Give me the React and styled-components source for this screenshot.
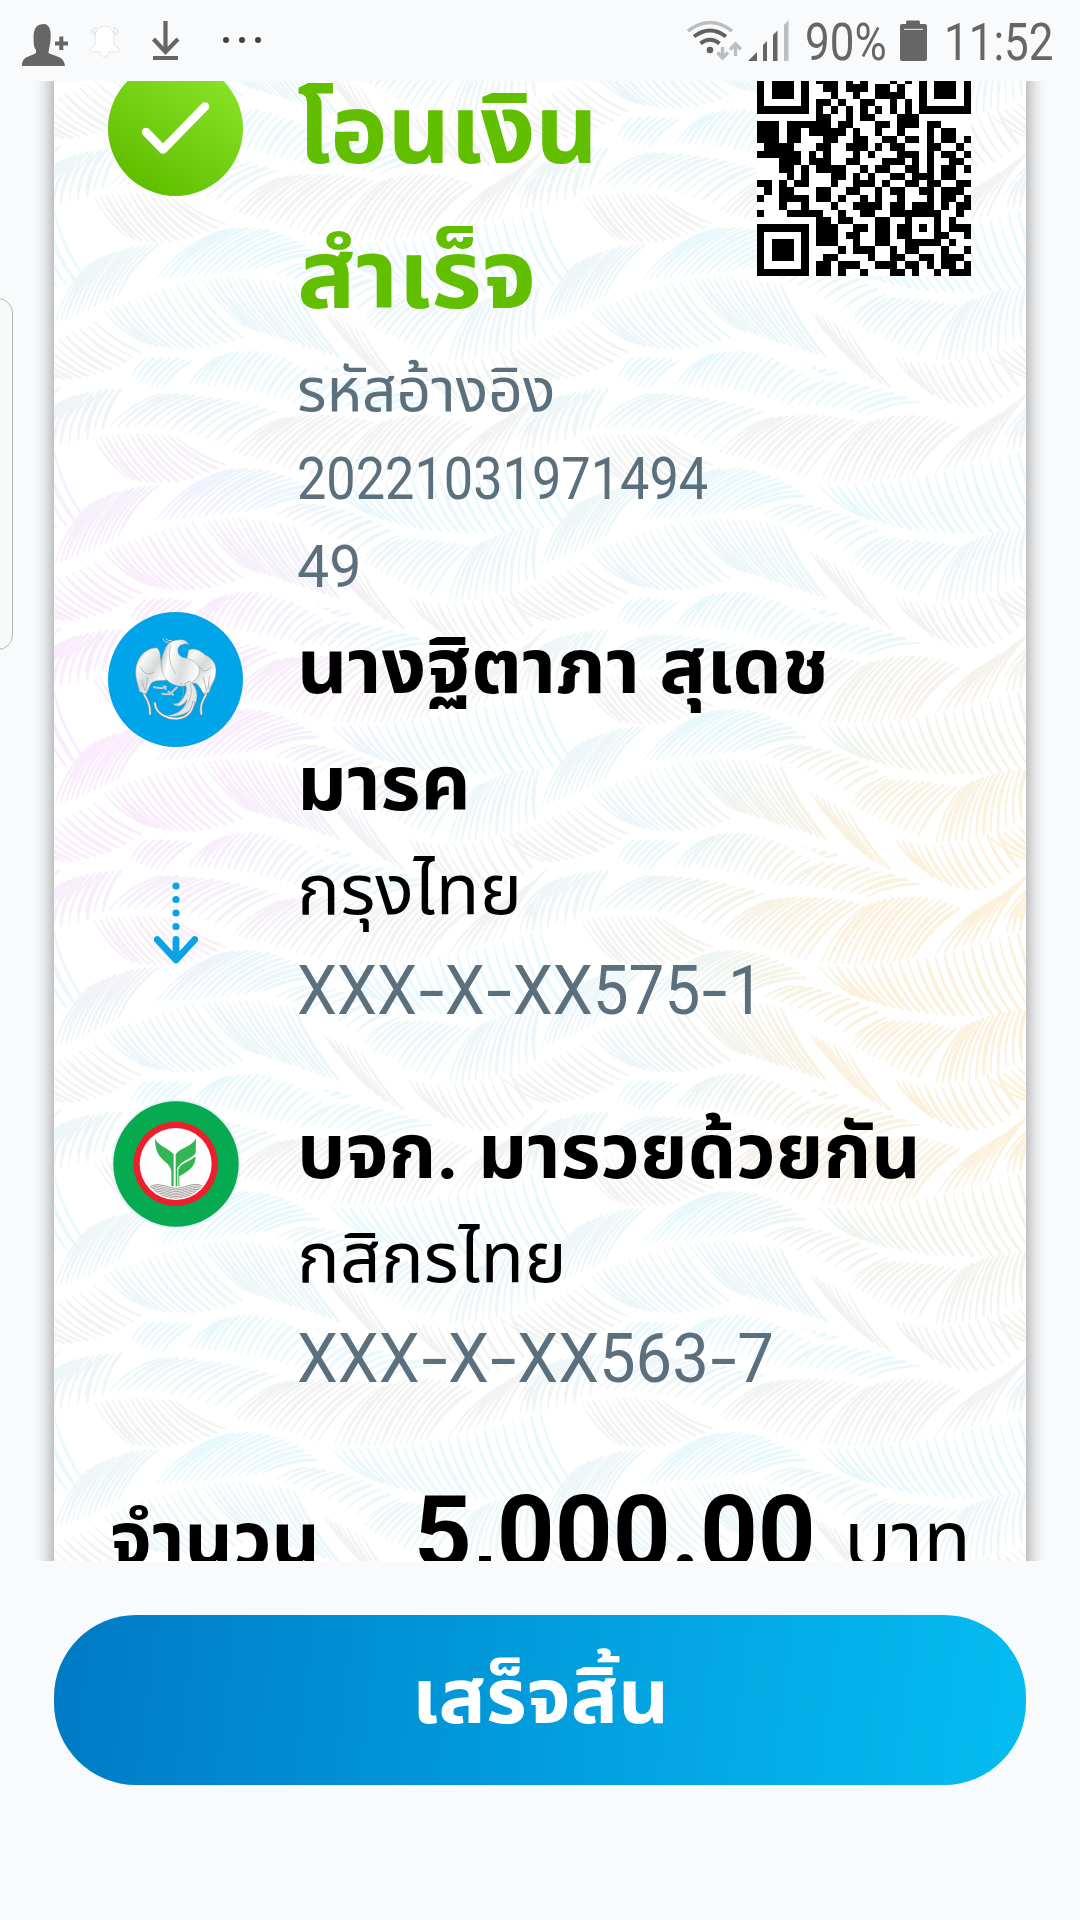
import React, { useLayoutEffect, useRef, useState } from "react";
import styled, { createGlobalStyle } from "styled-components";

const GlobalStyle = createGlobalStyle`
  * { box-sizing: border-box; }
  html, body { margin: 0; padding: 0; }
  body {
    background: #f9fafc;
    font-family: Roboto, "Noto Sans Thai", "Noto Sans", "Liberation Sans", sans-serif;
  }
`;

const Screen = styled.div`
  position: relative;
  display: flex;
  flex-direction: column;
  width: 1080px;
  height: 1920px;
  overflow: hidden;
  background: #f9fafc;
`;

const StatusBar = styled.header`
  display: flex;
  justify-content: space-between;
  height: 81px;
  flex: none;
`;

const StatusGroup = styled.div`
  display: flex;
  align-items: flex-start;
`;

const Viewport = styled.main`
  flex: none;
  height: 1480px;
  padding: 0 54px;
  overflow: hidden;
`;

const Card = styled.section`
  position: relative;
  width: 972px;
  height: 1600px;
  padding: 0 54px;
  background: #fff;
  box-shadow: 0 0 19px rgba(0, 0, 0, 0.46);
`;

const Backdrop = styled.svg`
  position: absolute;
  inset: 0;
  width: 972px;
  height: 1600px;
`;

const CardBody = styled.div`
  position: relative;
  display: flex;
  flex-direction: column;
  margin-top: -18px;
`;

const Row = styled.div`
  display: grid;
  grid-template-columns: 135px 1fr;
  column-gap: 54px;
  height: ${(p) => p.$height}px;
`;

const IconColumn = styled.div`
  display: flex;
  flex-direction: column;
  align-items: center;
  margin-top: ${(p) => -(p.$lift || 0)}px;
  gap: ${(p) => p.$gap || 0}px;

  svg { flex: none; display: block; }
`;

const HeadContent = styled.div`
  display: flex;
  justify-content: space-between;
  padding-right: 1px;
`;

const TextColumn = styled.div`
  display: flex;
  flex-direction: column;
`;

const Line = styled.div`
  display: flex;
  align-items: baseline;
  height: ${(p) => p.$height}px;
  padding-left: ${(p) => p.$indent || 0}px;

  &::before {
    content: "";
    width: 0;
    height: ${(p) => p.$baseline}px;
  }
`;

const TextRun = styled.span`
  display: inline-block;
  flex: none;
  transform-origin: 0 50%;
  white-space: nowrap;
  line-height: 1;
  font-size: ${(p) => p.$size}px;
  font-weight: ${(p) => p.$weight || 400};
  color: ${(p) => p.$color || "#000"};
`;

const FitBox = styled.span`
  display: inline-flex;
  align-items: baseline;
  flex: none;
  width: ${(p) => p.$width}px;
`;

const Dash = styled.span`
  display: inline-block;
  margin: 0 5px 0 6px;
  transform: scaleX(1.45);
`;

function FitText({ width, children, ...rest }) {
  const ref = useRef(null);
  const [scale, setScale] = useState(1);
  useLayoutEffect(() => {
    if (ref.current) setScale(width / ref.current.offsetWidth);
  }, [width]);
  return (
    <FitBox $width={width}>
      <TextRun ref={ref} style={{ transform: `scaleX(${scale})` }} {...rest}>
        {children}
      </TextRun>
    </FitBox>
  );
}

function AccountNumber({ value, width }) {
  return (
    <Line $height={98} $baseline={65}>
      <FitText width={width} $size={69} $color={SLATE}>
        {value.split("-").map((part, i) => (
          <React.Fragment key={i}>
            {i > 0 && <Dash>-</Dash>}
            {part}
          </React.Fragment>
        ))}
      </FitText>
    </Line>
  );
}

const AmountRow = styled.div`
  display: flex;
  height: 120px;
`;

const Footer = styled.footer`
  flex: none;
  padding: 54px 54px 0;
`;

const DoneButton = styled.button`
  display: flex;
  justify-content: center;
  width: 972px;
  height: 170px;
  padding: 0;
  border: 0;
  border-radius: 82px;
  font-family: inherit;
  background: linear-gradient(97deg, #007ac5 0%, #0197d9 42%, #03a9e4 68%, #05bcf1 100%);
`;

const EdgeHandle = styled.div`
  position: absolute;
  left: -20px;
  top: 298px;
  width: 33px;
  height: 352px;
  border: 1.5px solid #b5b8b8;
  border-radius: 15px;
  background: #f8faf9;
`;

/* ---------- feather background ---------- */

const TILE_W = 487;
const TILE_H = 241;
const CYAN = "#e8f8fd";
const TEAL = "#edf6f8";
const GREY = "#f2f4f4";

/* base curve, tip curve, stroke count, bend, colour */
const LEAVES = [
  [[350, 165, 390, 190, 440, 200], [395, 108, 470, 105, 530, 115], 7, -0.12, CYAN],
  [[520, 188, 680, 190, 850, 247], [600, 108, 740, 40, 940, 185], 18, -0.12, CYAN],
  [[885, 245, 980, 250, 1085, 278], [960, 175, 1090, 180, 1240, 240], 9, -0.14, CYAN],
  [[900, 130, 930, 145, 960, 160], [905, 128, 950, 140, 1000, 150], 4, 0.05, CYAN],
  [[285, 315, 450, 300, 625, 368], [440, 215, 600, 215, 780, 268], 14, -0.14, TEAL],
  [[650, 392, 760, 420, 900, 467], [790, 290, 930, 265, 1065, 298], 14, -0.12, GREY],
  [[950, 476, 1090, 490, 1220, 462], [1080, 305, 1230, 250, 1360, 312], 15, -0.14, GREY],
  [[1290, 450, 1370, 430, 1440, 408], [1440, 300, 1500, 270, 1580, 195], 7, -0.12, GREY],
  [[1500, 385, 1560, 378, 1660, 350], [1530, 300, 1610, 220, 1700, 215], 8, -0.12, GREY],
  [[945, 488, 1240, 490, 1560, 378], [1050, 575, 1310, 680, 1660, 600], 24, 0.12, CYAN],
  [[425, 592, 550, 590, 740, 560], [610, 450, 760, 410, 905, 522], 15, -0.14, CYAN],
  [[780, 580, 900, 610, 1045, 700], [870, 545, 1010, 555, 1145, 640], 11, -0.12, TEAL],
  [[1040, 722, 1120, 770, 1235, 822], [1125, 650, 1250, 650, 1350, 672], 12, -0.12, TEAL],
  [[1290, 838, 1400, 840, 1545, 770], [1370, 670, 1460, 620, 1555, 620], 13, -0.14, TEAL],
  [[125, 725, 210, 700, 310, 645], [230, 545, 330, 490, 430, 490], 12, -0.14, TEAL],
  [[270, 690, 380, 640, 530, 600], [390, 785, 520, 830, 680, 770], 14, 0.12, TEAL],
  [[10, 825, 120, 780, 240, 722], [130, 895, 260, 900, 380, 815], 12, 0.1, GREY],
  [[560, 598, 680, 575, 830, 612], [690, 740, 820, 780, 965, 830], 15, 0.08, TEAL],
  [[920, 690, 960, 710, 1030, 745], [1010, 800, 1080, 890, 1155, 920], 7, 0.08, GREY],
  [[1170, 825, 1290, 875, 1470, 800], [1230, 900, 1390, 1050, 1535, 915], 13, 0.1, GREY],
  [[240, 348, 350, 325, 480, 345], [340, 470, 470, 510, 630, 430], 14, 0.1, GREY],
  [[50, 345, 150, 330, 265, 325], [150, 235, 230, 200, 320, 200], 10, -0.14, TEAL],
];

const quad = (c, t) => {
  const u = 1 - t;
  return [
    (u * u * c[0] + 2 * u * t * c[2] + t * t * c[4]) / 2.958,
    (u * u * c[1] + 2 * u * t * c[3] + t * t * c[5]) / 3,
  ];
};

const r1 = (n) => Math.round(n * 10) / 10;

function leafPath([base, tip, count, bend]) {
  let d = "";
  for (let i = 0; i < count; i += 1) {
    const t = i / (count - 1);
    const [ax, ay] = quad(base, t);
    const [bx, by] = quad(tip, t);
    const dx = bx - ax;
    const dy = by - ay;
    const len = Math.hypot(dx, dy) || 1;
    const w = 1.5 + ((i * 7) % 5) * 0.35;
    const ox = (-dy / len) * w;
    const oy = (dx / len) * w;
    const cx = (ax + bx) / 2 - dy * bend;
    const cy = (ay + by) / 2 + dx * bend;
    d += `M${r1(ax + ox * 0.3)} ${r1(ay + oy * 0.3)}Q${r1(cx + ox)} ${r1(cy + oy)} ${r1(bx + ox * 0.5)} ${r1(by + oy * 0.5)}L${r1(bx - ox * 0.5)} ${r1(by - oy * 0.5)}Q${r1(cx - ox)} ${r1(cy - oy)} ${r1(ax - ox * 0.3)} ${r1(ay - oy * 0.3)}Z`;
  }
  return d;
}

const LEAF_PATHS = LEAVES.map((l) => ({ d: leafPath(l), color: l[4] }));

function Feathers() {
  const offsets = [];
  [-2, -1, 0, 1].forEach((x) => [-2, -1, 0, 1].forEach((y) => offsets.push([x, y])));
  return (
    <Backdrop viewBox="0 0 972 1600" aria-hidden="true">
      <defs>
        <g id="leaves">
          {LEAF_PATHS.map((l, i) => (
            <path key={i} d={l.d} fill={l.color} />
          ))}
        </g>
        <g id="leafShapes" fill="#fff">
          {LEAF_PATHS.map((l, i) => (
            <path key={i} d={l.d} />
          ))}
        </g>
        <pattern id="feather" width={TILE_W} height={TILE_H} patternUnits="userSpaceOnUse" x="446" y="259">
          {offsets.map(([x, y]) => (
            <use key={`${x}${y}`} href="#leaves" x={x * TILE_W} y={y * TILE_H} />
          ))}
        </pattern>
        <pattern id="featherMask" width={TILE_W} height={TILE_H} patternUnits="userSpaceOnUse" x="446" y="259">
          {offsets.map(([x, y]) => (
            <use key={`${x}${y}`} href="#leafShapes" x={x * TILE_W} y={y * TILE_H} />
          ))}
        </pattern>
        <mask id="featherCut" maskUnits="userSpaceOnUse" x="0" y="0" width="972" height="1600">
          <rect width="972" height="1600" fill="url(#featherMask)" />
        </mask>
        <radialGradient id="pink" gradientUnits="userSpaceOnUse" cx="40" cy="650" r="340">
          <stop offset="0.4" stopColor="#fcebfd" />
          <stop offset="1" stopColor="#fcebfd" stopOpacity="0" />
        </radialGradient>
        <radialGradient id="gold" gradientUnits="userSpaceOnUse" cx="960" cy="920" r="390">
          <stop offset="0.4" stopColor="#fdf1dc" />
          <stop offset="1" stopColor="#fdf1dc" stopOpacity="0" />
        </radialGradient>
      </defs>
      <rect width="972" height="1600" fill="url(#feather)" />
      <g mask="url(#featherCut)">
        <rect width="972" height="1600" fill="url(#pink)" />
        <rect width="972" height="1600" fill="url(#gold)" />
      </g>
    </Backdrop>
  );
}

/* ---------- QR code ---------- */

const QR_ROWS = [
  "11111110110010110010101111111",
  "10000010101101001101001000001",
  "10111010111010100010101011101",
  "10111010011011101101001011101",
  "10111010001001001111001011101",
  "10000010110100110010101000001",
  "11111110101010101010101111111",
  "00000000110010110001110000000",
  "11101111110110001101110110000",
  "11101101111101001001000101100",
  "11101100011001100110110101101",
  "01111000110011101011000110010",
  "11111101010001010001110101101",
  "00011101110011000111010100110",
  "00011010111100101100110101101",
  "00001010001101010011011101100",
  "11010110001001110100110110011",
  "01011000110011001011001101110",
  "10011110110100101001000101101",
  "00010010001001111011011101011",
  "10001111100100110011111110010",
  "00000000110110001100100010100",
  "11111110111001101101101010111",
  "10000010111011001101100011001",
  "10111010111001001100111110100",
  "10111010000101110010110001001",
  "10111010011000010011001101110",
  "10000010110111001110110101101",
  "11111110110100100011010010111",
];

function QrCode() {
  let d = "";
  QR_ROWS.forEach((row, y) => {
    for (let x = 0; x < row.length; x += 1) {
      if (row[x] === "1") d += `M${x} ${y}h1v1h-1z`;
    }
  });
  return (
    <svg width="214" height="214" viewBox="0 0 29 29" shapeRendering="crispEdges">
      <rect width="29" height="29" fill="#fff" />
      <path d={d} fill="#000" />
    </svg>
  );
}

/* ---------- icons ---------- */

function SuccessIcon() {
  return (
    <svg width="135" height="135" viewBox="0 0 135 135">
      <defs>
        <linearGradient id="ok" x1="0.25" y1="0.9" x2="0.8" y2="0.1">
          <stop offset="0" stopColor="#62bf00" />
          <stop offset="1" stopColor="#87e226" />
        </linearGradient>
      </defs>
      <circle cx="67.5" cy="67.5" r="67.5" fill="url(#ok)" />
      <path d="M38 71 L55 88.500 L97 45.500" fill="none" stroke="#fff" strokeWidth="8.600" strokeLinecap="round" strokeLinejoin="round" />
    </svg>
  );
}

function GarudaLogo() {
  return (
    <svg width="135" height="135" viewBox="0 0 405 405">
      <defs>
        <linearGradient id="silver" x1="0" y1="0" x2="1" y2="1">
          <stop offset="0" stopColor="#c0c3c3" />
          <stop offset="0.25" stopColor="#f8f8f8" />
          <stop offset="0.5" stopColor="#d6d9d9" />
          <stop offset="0.75" stopColor="#ffffff" />
          <stop offset="1" stopColor="#a3a8a9" />
        </linearGradient>
        <linearGradient id="silverBody" x1="0" y1="0" x2="1" y2="0.3">
          <stop offset="0" stopColor="#9fa4a5" />
          <stop offset="0.3" stopColor="#ffffff" />
          <stop offset="0.65" stopColor="#dadddd" />
          <stop offset="1" stopColor="#f9f9f9" />
        </linearGradient>
      </defs>
      <circle cx="202.5" cy="202.5" r="202.5" fill="#00a5e9" />
      <g stroke="#8b9192" strokeWidth="1.500">
        <path d="M147 107C110 107 84 140 83 178C82 202 90 215 94 238L112 247C121 237 122 225 130 214C142 202 160 208 180 204C166 176 160 155 158 141C157 128 157 116 147 107Z" fill="url(#silver)" />
        <path d="M239 129L241 114C254 106 276 113 292 129C317 140 328 162 323 188C320 211 306 222 305 239L291 249C281 240 278 227 270 219C256 206 240 224 214 211Z" fill="url(#silver)" />
        <path d="M242 98C239 88 227 81 211 84C190 84 176 96 169 116C158 139 156 164 166 187C177 216 212 230 240 219C262 208 280 188 274 168C266 150 248 140 229 137C206 134 204 106 219 99L233 95Z" fill="url(#silverBody)" />
        <path d="M229 215C243 230 230 252 221 264C210 277 196 279 190 270C204 291 226 282 237 263C230 295 200 311 168 311C205 320 254 304 264 270C273 245 262 219 245 208Z" fill="#e3e6e6" />
      </g>
      <g fill="none" strokeLinecap="round">
        <path d="M108 247C118 262 128 281 126 306M294 248C284 263 275 284 280 306" stroke="#909899" strokeWidth="8" />
        <path d="M108 247C118 262 128 281 126 306M294 248C284 263 275 284 280 306" stroke="#f3f4f4" strokeWidth="4" />
        <path d="M141 274C142 306 180 323 211 319C239 316 253 295 257 272" stroke="#838b8c" strokeWidth="8" />
        <path d="M141 274C142 306 180 323 211 319C239 316 253 295 257 272" stroke="#edeeee" strokeWidth="5" />
        <path d="M138 226L162 229L174 224M163 246L185 247L207 226M173 231L168 223M195 248L181 239" stroke="#c8cccc" strokeWidth="6" />
        <path d="M166 81Q168 92 181 91M174 81Q180 88 190 86" stroke="#d5d8d8" strokeWidth="3" />
        <path d="M189 100C178 132 186 160 202 184M219 212C235 241 223 270 203 280M247 216C258 251 239 285 207 304" stroke="#a8adad" strokeWidth="2" />
        <path d="M97 164Q111 198 139 180M275 165Q288 190 309 166M102 205L110 235M119 197L113 236M286 196L296 235M305 192L300 230" stroke="#a9aeae" strokeWidth="2.500" />
      </g>
    </svg>
  );
}

function TransferArrow() {
  return (
    <svg width="44" height="84" viewBox="0 0 44 84" fill="none">
      {[4, 17.5, 31, 44.5].map((y) => (
        <circle key={y} cx="22" cy={y} r="3.6" fill="#0aa3e4" />
      ))}
      <path d="M22 57.500V77M3.200 57.500L22 78L40.800 57.500" stroke="#0aa3e4" strokeWidth="6.800" strokeLinecap="round" strokeLinejoin="round" />
    </svg>
  );
}

function KBankLogo() {
  return (
    <svg width="130" height="130" viewBox="0 0 390 390">
      <defs>
        <clipPath id="kInner"><circle cx="195" cy="195" r="104" /></clipPath>
      </defs>
      <circle cx="195" cy="195" r="194" fill="#e7f1f6" />
      <circle cx="195" cy="195" r="188" fill="#06aa50" />
      <circle cx="194" cy="195" r="127" fill="#ec1f2d" />
      <circle cx="194" cy="195" r="108" fill="#fefefe" />
      <g fill="#33b554">
        <path d="M132 119C145 143 173 147 188 166L188 262H181V217C178 183 132 189 132 119Z" />
        <path d="M255 118C244 143 209 146 194 166V262H199V211C205 185 248 178 254 161Z" />
        <path d="M254 172C254 207 227 219 205 232V262H202V213C205 193 238 188 254 172Z" />
      </g>
      <g clipPath="url(#kInner)" fill="none" stroke="#8f8682" strokeWidth="2.400">
        {[0, 5, 10, 15, 20, 25, 30, 35, 40].map((y) => (
          <path key={y} d={`M75 ${263 + y}Q100 ${272 + y} 118 ${262 + y}T160 ${260 + y}T195 ${268 + y}T232 ${260 + y}T272 ${260 + y}T315 ${263 + y}`} />
        ))}
      </g>
    </svg>
  );
}

function NotificationIcons() {
  return (
    <svg width="280" height="81" viewBox="0 0 280 81" fill="#666">
      <path d="M22 66C22 56 30 57 36 53V50C33 46 34 42 33.500 37C34 28 36 24 45 24L47 25C51 28 51 34 50.500 40C50 45 49 48 48.500 53C56 57 64 56 65 66Z" />
      <path d="M59.300 36.500h4v5H68v4h-4.700v4.500h-4v-4.500H55v-4h4.300z" />
      <path d="M105 26C110 27 114 31 114 38V45C115 47 119 47 119 50C119 53 116 52 109 52C108 58 101 58 100 52C94 52 90 53 90 50C90 47 95 48 95 44V37C95 31 99 27 105 26Z" fill="#fff" stroke="#dfe0e0" strokeWidth="0.800" />
      <path d="M92 34Q91 28 97 28M94 36Q94 32 97 31M118 34Q119 28 113 28M116 36Q116 32 113 31" fill="none" stroke="#d4d6d6" strokeWidth="0.900" />
      <path d="M165.500 21V52M153.500 39L165.500 52L178 39" fill="none" stroke="#666" strokeWidth="4.200" />
      <rect x="153" y="56" width="25" height="4" />
      <g fill="#444">
        <circle cx="226" cy="40" r="3" />
        <circle cx="242" cy="40" r="3" />
        <circle cx="258" cy="40" r="3" />
      </g>
    </svg>
  );
}

function SignalIcons() {
  return (
    <svg width="120" height="81" viewBox="0 0 120 81" fill="none">
      <path d="M9 31Q31 14 53 31" stroke="#bcbdbe" strokeWidth="3.600" />
      <path d="M15 36.500Q31 24.500 47 36.500" stroke="#606060" strokeWidth="3.800" />
      <path d="M21.500 43.500Q31 36 40.500 43.500" stroke="#606060" strokeWidth="3.800" />
      <circle cx="31" cy="50" r="3.300" fill="#606060" />
      <path d="M43.500 47V57M38.500 52.500L43.500 58L49 52.500M56.500 56V45M51 49.500L56.500 44L62 49.500" stroke="#bcbdbe" strokeWidth="3.400" />
      <path d="M69 61L78 52V61ZM84 45L88 41V61H84ZM94 35L98.500 30.500V61H94Z" fill="#666" />
      <path d="M105 25L109.500 20V61H105Z" fill="#bcbdbe" />
    </svg>
  );
}

function BatteryIcon() {
  return (
    <svg width="57" height="81" viewBox="0 0 57 81">
      <path d="M20 20.500H32Q33 20.500 33 24H38Q40 24 40 26V59Q40 61 38 61H15Q13 61 13 59V26Q13 24 15 24H19Q19 20.500 20 20.500Z" fill="#666" />
      <rect x="17" y="28.800" width="19" height="1.200" fill="#ddd" />
    </svg>
  );
}

const Clock = styled(Line)`
  width: 136px;
`;

const GREEN = "#62bf00";
const SLATE = "#5c6f7c";

export default function App() {
  return (
    <Screen>
      <GlobalStyle />
      <StatusBar>
        <NotificationIcons />
        <StatusGroup>
          <SignalIcons />
          <Line $height={81} $baseline={60} $indent={6}>
            <FitText width={82} $size={52} $color="#666">90%</FitText>
          </Line>
          <BatteryIcon />
          <Clock $height={81} $baseline={60}>
            <FitText width={110} $size={52} $color="#666">11:52</FitText>
          </Clock>
        </StatusGroup>
      </StatusBar>

      <Viewport>
        <Card>
          <Feathers />
          <CardBody>
            <Row $height={554}>
              <IconColumn $lift={2}><SuccessIcon /></IconColumn>
              <HeadContent>
                <TextColumn>
                  <Line $height={145} $baseline={100}><FitText width={301} $size={96} $weight={700} $color={GREEN}>โอนเงิน</FitText></Line>
                  <Line $height={145} $baseline={100}><FitText width={239} $size={96} $weight={700} $color={GREEN}>สำเร็จ</FitText></Line>
                  <Line $height={88} $baseline={58}><FitText width={259} $size={60} $color={SLATE}>รหัสอ้างอิง</FitText></Line>
                  <Line $height={88} $baseline={58}><FitText width={411} $size={59} $color={SLATE}>20221031971494</FitText></Line>
                  <Line $height={88} $baseline={58}><FitText width={64} $size={59} $color={SLATE}>49</FitText></Line>
                </TextColumn>
                <IconColumn $lift={1}><QrCode /></IconColumn>
              </HeadContent>
            </Row>
            <Row $height={485}>
              <IconColumn $gap={135} $lift={5}>
                <GarudaLogo />
                <TransferArrow />
              </IconColumn>
              <TextColumn>
                <Line $height={117} $baseline={76}><FitText width={532} $size={76} $weight={700}>นางฐิตาภา สุเดช</FitText></Line>
                <Line $height={117} $baseline={76}><FitText width={174} $size={76} $weight={700}>มารค</FitText></Line>
                <Line $height={98} $baseline={63}><FitText width={225} $size={70}>กรุงไทย</FitText></Line>
                <AccountNumber width={467} value="XXX-X-XX575-1" />
              </TextColumn>
            </Row>
            <Row $height={380}>
              <IconColumn $lift={3}><KBankLogo /></IconColumn>
              <TextColumn>
                <Line $height={117} $baseline={76}><FitText width={624} $size={76} $weight={700}>บจก. มารวยด้วยกัน</FitText></Line>
                <Line $height={98} $baseline={63}><FitText width={270} $size={70}>กสิกรไทย</FitText></Line>
                <AccountNumber width={477} value="XXX-X-XX563-7" />
              </TextColumn>
            </Row>
            <AmountRow>
              <Line $height={120} $baseline={84} $indent={2}><FitText width={210} $size={76} $weight={700}>จำนวน</FitText></Line>
              <Line $height={120} $baseline={86} $indent={94}><FitText width={402} $size={102} $weight={700}>5,000.00</FitText></Line>
              <Line $height={120} $baseline={84} $indent={28}><FitText width={127} $size={76}>บาท</FitText></Line>
            </AmountRow>
          </CardBody>
        </Card>
      </Viewport>

      <Footer>
        <DoneButton>
          <Line $height={170} $baseline={108}><FitText width={257} $size={76} $weight={700} $color="#fff">เสร็จสิ้น</FitText></Line>
        </DoneButton>
      </Footer>
      <EdgeHandle />
    </Screen>
  );
}
